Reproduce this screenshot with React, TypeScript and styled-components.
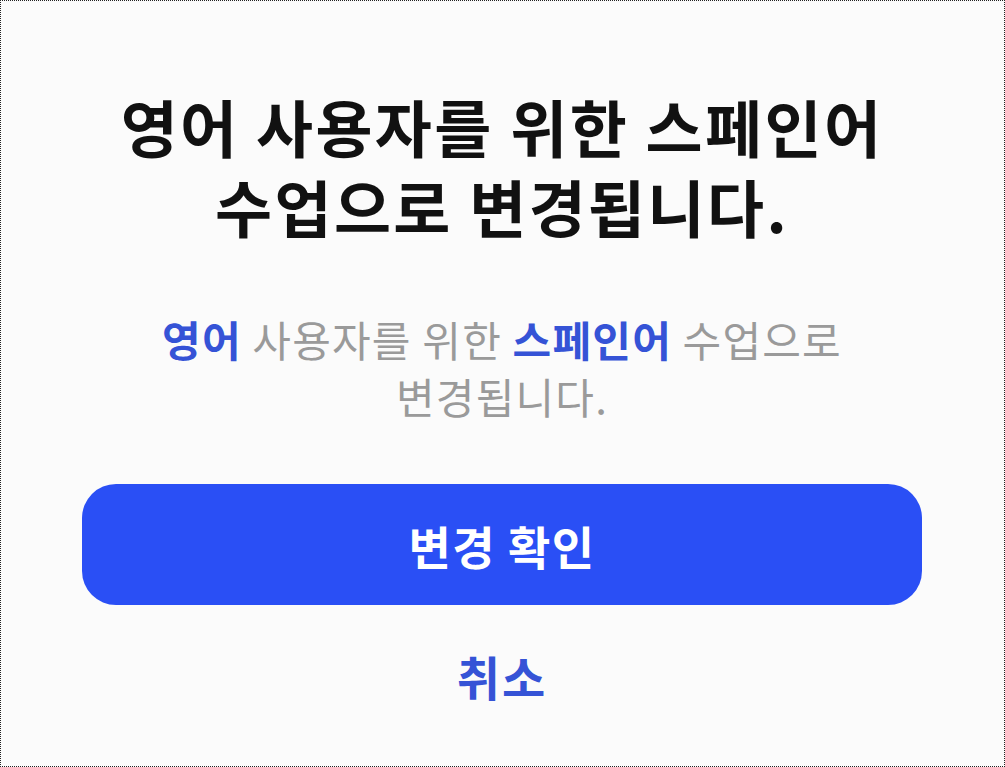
import React from 'react';
import styled, { createGlobalStyle } from 'styled-components';

const GlobalStyle = createGlobalStyle`
  html, body {
    margin: 0;
    padding: 0;
    background: #fbfbfb;
  }
  body {
    font-family: "Noto Sans CJK KR", "Noto Sans", sans-serif;
  }
`;

const Frame = styled.div`
  box-sizing: border-box;
  width: 1005px;
  height: 767px;
  border: 1px dotted #222;
  background: #fbfbfb;
  display: flex;
  flex-direction: column;
  align-items: center;
  padding: 85px 82px 0 81px;
`;

const Title = styled.h1`
  margin: 0;
  font-size: 62px;
  font-weight: 700;
  line-height: 80px;
  color: #111;
  text-align: center;
  letter-spacing: 2.4px;
`;

const Description = styled.p`
  margin: 64px 0 0;
  font-size: 42px;
  font-weight: 400;
  line-height: 57px;
  color: #9a9a9a;
  text-align: center;
  letter-spacing: 1.2px;
`;

const Highlight = styled.span`
  color: #3553d6;
  font-weight: 700;
`;

const PrimaryButton = styled.button`
  margin-top: 60px;
  width: 100%;
  height: 121px;
  border: none;
  border-radius: 34px;
  background: #2a4ff5;
  color: #fff;
  font-family: inherit;
  font-size: 46px;
  font-weight: 700;
  letter-spacing: 1.5px;
  cursor: pointer;
`;

const TextButton = styled.button`
  margin-top: 46px;
  border: none;
  background: none;
  padding: 0;
  line-height: 50px;
  color: #3553d6;
  font-family: inherit;
  font-size: 47px;
  font-weight: 700;
  letter-spacing: 2px;
  cursor: pointer;
`;

export default function App() {
  return (
    <>
      <GlobalStyle />
      <Frame>
        <Title>
          영어 사용자를 위한 스페인어
          <br />
          수업으로 변경됩니다.
        </Title>
        <Description>
          <Highlight>영어</Highlight> 사용자를 위한 <Highlight>스페인어</Highlight> 수업으로
          <br />
          변경됩니다.
        </Description>
        <PrimaryButton>변경 확인</PrimaryButton>
        <TextButton>취소</TextButton>
      </Frame>
    </>
  );
}
